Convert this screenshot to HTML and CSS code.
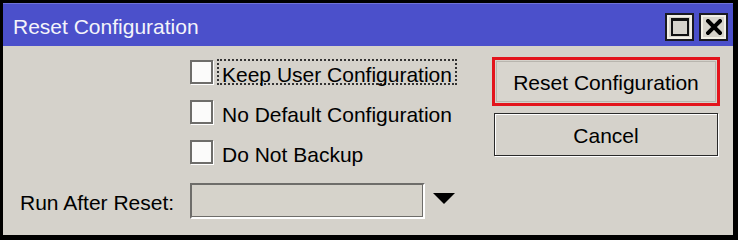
FILE: index.html
```html
<!DOCTYPE html>
<html>
<head>
<meta charset="utf-8">
<link rel="stylesheet" href="styles.css">
</head>
<body>
<div class="window">
  <div class="titlebar">
    <span class="title">Reset Configuration</span>
    <div class="tbtns">
      <div class="tbtn"><span class="maxicon"></span></div>
      <div class="tbtn">
        <svg width="16" height="16" viewBox="0 0 16 16"><path d="M2 2 L14 14 M14 2 L2 14" stroke="#000" stroke-width="4" stroke-linecap="square"/></svg>
      </div>
    </div>
  </div>
  <div class="content">
    <div class="form">
      <div class="checks">
        <div class="check"><span class="box"></span><span class="lbl focus">Keep User Configuration</span></div>
        <div class="check"><span class="box"></span><span class="lbl">No Default Configuration</span></div>
        <div class="check"><span class="box"></span><span class="lbl">Do Not Backup</span></div>
      </div>
      <div class="run">
        <span class="runlbl">Run After Reset:</span>
        <span class="field"></span>
        <svg class="arrow" width="22" height="11" viewBox="0 0 22 11"><path d="M0 0 H22 L11 11 Z" fill="#000"/></svg>
      </div>
    </div>
    <div class="buttons">
      <div class="btn primary"><span class="btninner">Reset Configuration</span></div>
      <div class="btn cancel">Cancel</div>
    </div>
  </div>
</div>
</body>
</html>
```
FILE: styles.css
```css
html, body {
  margin: 0;
  padding: 0;
  background: #000;
}
body {
  width: 738px;
  height: 240px;
  overflow: hidden;
  font-family: "Liberation Sans", Arial, sans-serif;
  font-size: 21px;
  color: #000;
}
.window {
  margin: 3px 5px 5px 3px;
  width: 730px;
  height: 232px;
  background: #d5d2cb;
  display: flex;
  flex-direction: column;
}
.titlebar {
  height: 43px;
  background: #4b50cb;
  border-top: 1px solid #6f73d8;
  box-sizing: border-box;
  display: flex;
  align-items: center;
  justify-content: space-between;
  padding: 0 5px 0 10px;
}
.title {
  color: #f4f4fa;
  font-size: 21px;
  margin-top: 3px;
}
.tbtns {
  display: flex;
  gap: 5px;
  margin-top: 4px;
}
.tbtn {
  width: 29px;
  height: 28px;
  box-sizing: border-box;
  border: 2px solid #1a1a22;
  box-shadow: inset 0 0 0 2px #f2f0e6;
  background: #d6d3cb;
  display: flex;
  align-items: center;
  justify-content: center;
}
.maxicon {
  width: 18px;
  height: 18px;
  box-sizing: border-box;
  border: 2px solid #111;
  border-top-width: 3px;
  background: #d6d3cb;
}
.content {
  flex: 1;
  display: flex;
}
.form {
  width: 489px;
  display: flex;
  flex-direction: column;
}
.checks {
  padding: 13px 0 0 187px;
  display: flex;
  flex-direction: column;
  gap: 14px;
}
.check {
  display: flex;
  align-items: center;
  height: 26px;
}
.box {
  width: 23px;
  height: 24px;
  box-sizing: border-box;
  border: 2px solid #6e6d6a;
  background: #fbfbfa;
  box-shadow: 1px 1px 0 #fff;
  flex: none;
}
.lbl {
  margin-left: 4px;
  padding: 0 3px 0 3px;
  border: 2px dotted transparent;
  height: 26px;
  line-height: 28px;
  box-sizing: border-box;
  white-space: nowrap;
}
.lbl.focus {
  border-color: #333;
}
.run {
  margin-top: 18px;
  display: flex;
  align-items: center;
}
.runlbl {
  width: 187px;
  flex: none;
  padding-left: 17px;
  box-sizing: border-box;
  white-space: nowrap;
  padding-top: 4px;
}
.field {
  width: 235px;
  height: 36px;
  flex: none;
  box-sizing: border-box;
  border: 2px solid #6e6d6a;
  border-right-color: #fff;
  border-bottom-color: #fff;
  box-shadow: inset -1px -1px 0 #6e6d6a;
  background: #d6d3cb;
}
.arrow {
  margin-left: 8px;
  margin-top: -6px;
}
.buttons {
  width: 228px;
  padding-top: 11px;
  display: flex;
  flex-direction: column;
}
.btn {
  display: flex;
  align-items: center;
  justify-content: center;
  box-sizing: border-box;
  white-space: nowrap;
}
.primary {
  width: 228px;
  height: 49px;
  border: 3px solid #e3141c;
  padding: 1px;
}
.btninner {
  flex: 1;
  align-self: stretch;
  display: flex;
  align-items: center;
  justify-content: center;
  border: 1px solid #b8b5ae;
  background: #d8d5ce;
  padding-top: 2px;
}
.cancel {
  margin: 7px 0 0 2px;
  width: 224px;
  height: 43px;
  border: 1px solid #2a2a2a;
  box-shadow: 1px 1px 0 #fff, inset 1px 1px 0 #fff;
  padding-top: 2px;
}
```
